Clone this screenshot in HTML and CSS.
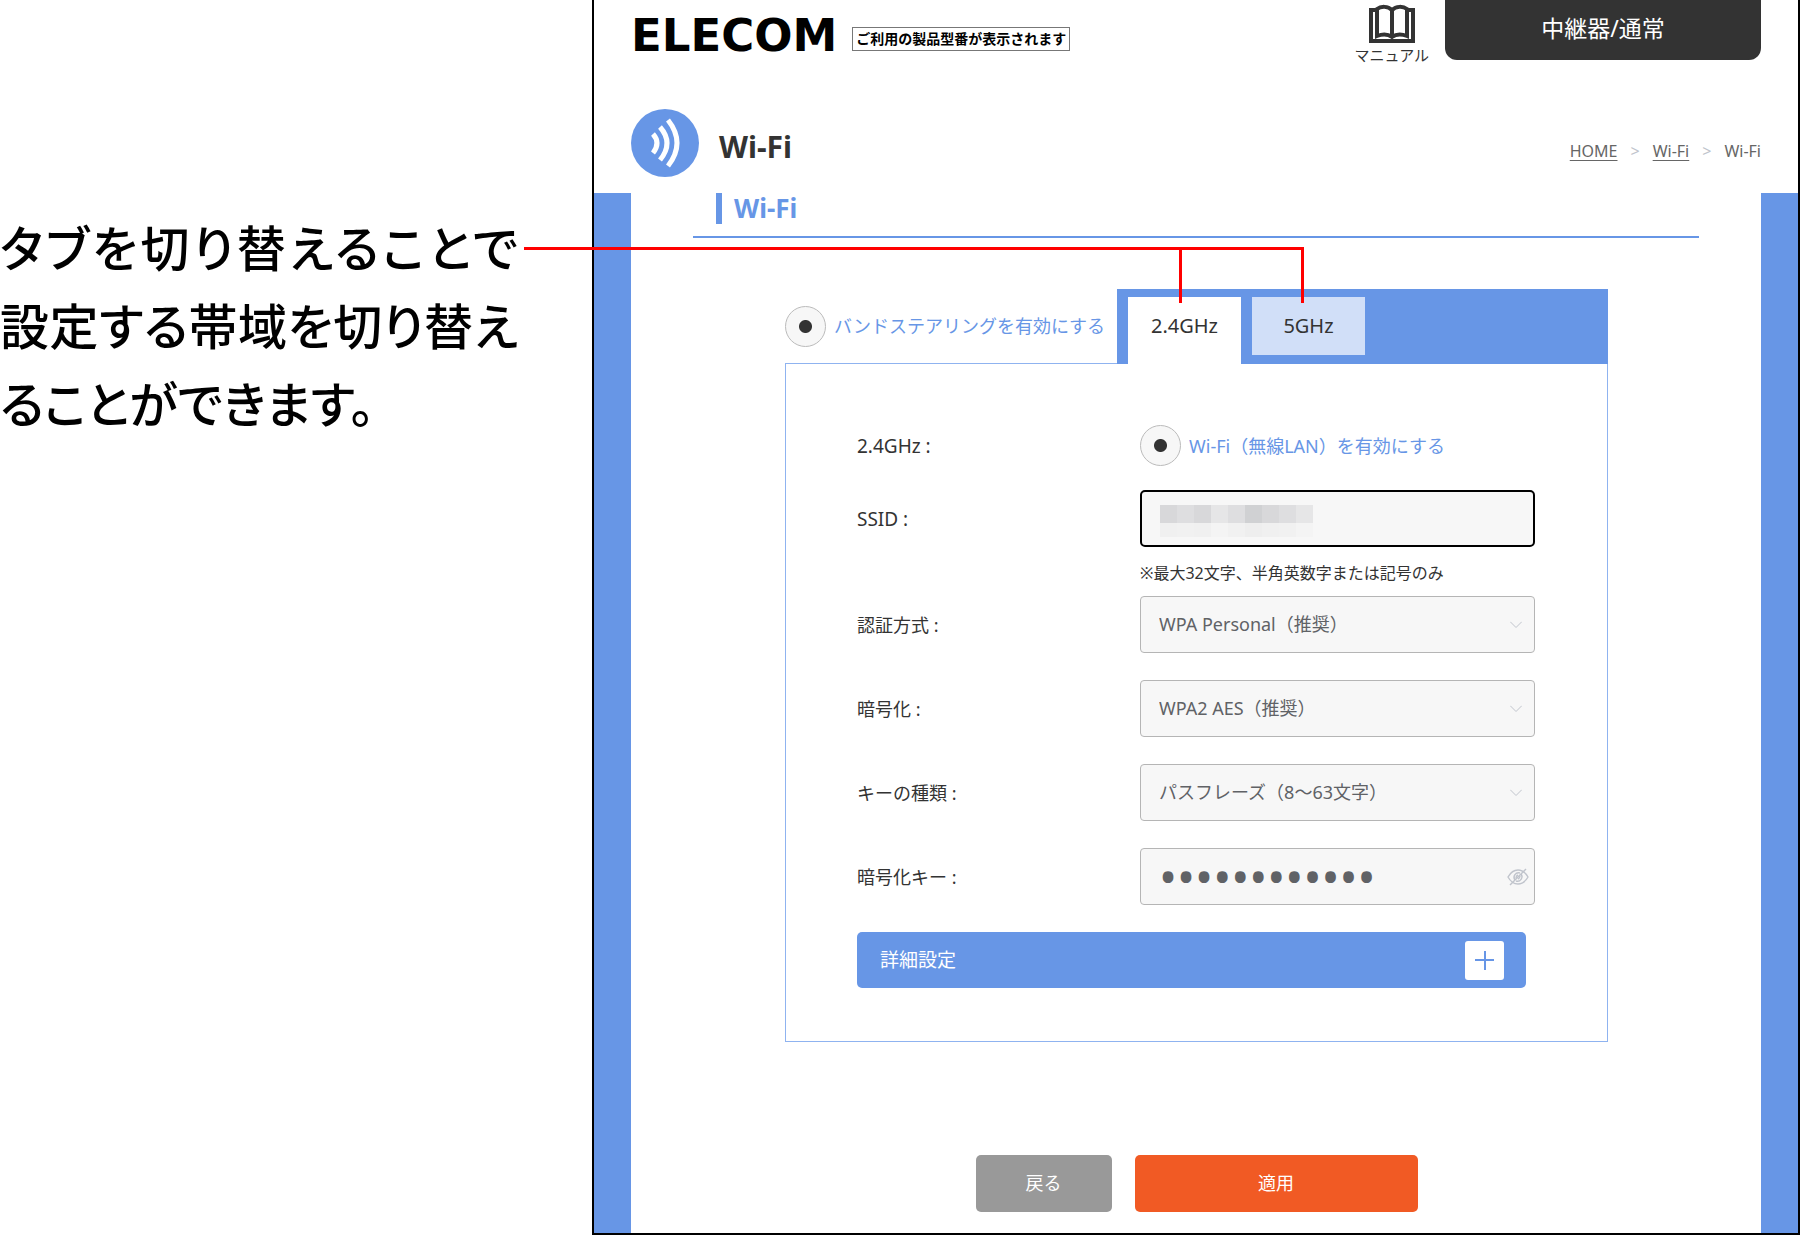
FILE: index.html
```html
<!DOCTYPE html>
<html lang="ja">
<head>
    <meta charset="UTF-8">
    <meta name="viewport" content="width=device-width, initial-scale=1.0">
    <title>Wi-Fi</title>
    <link rel="stylesheet" href="styles.css">
</head>
<body>

    <div class="page">
        <aside class="note">
            <p>タブを切り替えることで設定する帯域を切り替えることができます。</p>
        </aside>

        <div class="screen">
            <header class="header">
                <div class="logo">ELECOM</div>
                <div class="model">ご利用の製品型番が表示されます</div>
                <a href="#" class="manual">
                    <svg width="46" height="40" viewBox="0 0 46 40" fill="none" stroke="#333" stroke-width="4">
                        <path d="M7 6H2v31h42V6h-5"/>
                        <path d="M23 6C19 2 12 2 8 5v27c5-2 11-2 15 1 4-3 10-3 15-1V5C34 2 27 2 23 6z"/>
                        <path d="M23 6v27"/>
                    </svg>
                    <span>マニュアル</span>
                </a>
                <div class="mode">中継器/通常</div>
            </header>

            <div class="title-bar">
                <svg class="title-icon" width="68" height="68" viewBox="0 0 68 68">
                    <circle cx="34" cy="34" r="34" fill="#6796e6"/>
                    <g fill="none" stroke="#fff" stroke-width="5">
                        <path d="M22 25Q30 34 22 44"/>
                        <path d="M29 18Q43 34 29 51"/>
                        <path d="M37 11Q55 34 37 57"/>
                    </g>
                </svg>
                <h1>Wi-Fi</h1>
                <nav class="breadcrumb">
                    <a href="#">HOME</a>
                    <span class="sep">&gt;</span>
                    <a href="#">Wi-Fi</a>
                    <span class="sep">&gt;</span>
                    <span>Wi-Fi</span>
                </nav>
            </div>

            <main class="main">
                <div class="section-title">
                    <h2>Wi-Fi</h2>
                </div>

                <form class="settings">
                    <div class="tab-row">
                        <div class="check">
                            <input type="checkbox" id="steering" checked>
                            <label for="steering">バンドステアリングを有効にする</label>
                        </div>
                        <div class="tabs">
                            <button type="button" class="tab active">2.4GHz</button>
                            <button type="button" class="tab">5GHz</button>
                        </div>
                    </div>

                    <div class="panel">
                        <div class="row row-check">
                            <span class="name name-en">2.4GHz :</span>
                            <div class="check">
                                <input type="checkbox" id="wifi" checked>
                                <label for="wifi">Wi-Fi（無線LAN）を有効にする</label>
                            </div>
                        </div>

                        <div class="row row-ssid">
                            <label class="name name-en" for="ssid">SSID :</label>
                            <div class="field">
                                <input type="text" id="ssid" class="input ssid">
                                <!-- SSIDのモザイク -->
                                <div class="mosaic">
                                    <i class="m3"></i><i class="m2"></i><i class="m3"></i><i class="m1"></i><i class="m2"></i><i class="m4"></i><i class="m3"></i><i class="m2"></i><i class="m1"></i>
                                </div>
                            </div>
                            <p class="hint">※最大32文字、半角英数字または記号のみ</p>
                        </div>

                        <div class="row">
                            <label class="name" for="auth">認証方式 :</label>
                            <div class="field">
                                <select id="auth" class="input"><option>WPA Personal（推奨）</option></select>
                                <svg class="chevron" width="12" height="7" viewBox="0 0 12 7"><path d="M0 0l6 6 6-6"/></svg>
                            </div>
                        </div>

                        <div class="row">
                            <label class="name" for="cipher">暗号化 :</label>
                            <div class="field">
                                <select id="cipher" class="input"><option>WPA2 AES（推奨）</option></select>
                                <svg class="chevron" width="12" height="7" viewBox="0 0 12 7"><path d="M0 0l6 6 6-6"/></svg>
                            </div>
                        </div>

                        <div class="row">
                            <label class="name" for="keytype">キーの種類 :</label>
                            <div class="field">
                                <select id="keytype" class="input"><option>パスフレーズ（8～63文字）</option></select>
                                <svg class="chevron" width="12" height="7" viewBox="0 0 12 7"><path d="M0 0l6 6 6-6"/></svg>
                            </div>
                        </div>

                        <div class="row">
                            <label class="name" for="key">暗号化キー :</label>
                            <div class="field">
                                <input type="password" id="key" class="input key" value="passphrase12">
                                <svg class="eye" width="22" height="18" viewBox="0 0 22 18" fill="none" stroke="#c0c4cc" stroke-width="1.4">
                                    <path d="M1 9Q5 2 11 2t10 7q-4 7-10 7T1 9z"/>
                                    <path d="M8 12a4.500 4.500 0 0 1 5-7M14 6a4.500 4.500 0 0 1-5 7"/>
                                    <path d="M9 10q0-2 2-3M13 8q0 2-2 3"/>
                                    <path d="M3 17L19 1"/>
                                </svg>
                            </div>
                        </div>

                        <div class="detail">
                            <span>詳細設定</span>
                            <button type="button" class="plus" aria-label="詳細設定を開く"></button>
                        </div>
                    </div>

                    <div class="actions">
                        <button type="button" class="btn btn-back">戻る</button>
                        <button type="button" class="btn btn-apply">適用</button>
                    </div>
                </form>
            </main>
        </div>

        <!-- 説明文からタブへの引き出し線 -->
        <div class="leader"><div class="leader-drop"></div></div>
    </div>

</body>
</html>
```

FILE: styles.css
```css
* {
    box-sizing: border-box;
}

body {
    margin: 0;
    background: #fff;
    color: #333;
    font-family: "Noto Sans", "Noto Sans CJK JP", sans-serif;
    font-size: 18px;
    line-height: 24px;
}

h1, h2, p {
    margin: 0;
}

button, input, select {
    font-family: inherit;
    font-size: inherit;
    color: inherit;
}

button {
    border: none;
    padding: 0;
    cursor: pointer;
}

.page {
    position: relative;
    display: flex;
}

/* 説明文 */
.note {
    flex: 0 0 592px;
    padding: 207px 74px 0 0;
    color: #000;
    font-family: "Noto Sans CJK JP", sans-serif;
    font-size: 49px;
    font-weight: 500;
    line-height: 78px;
    font-feature-settings: "palt";
    text-align: justify;
}

.leader {
    position: absolute;
    top: 247px;
    left: 524px;
    right: 496px;
    height: 56px;
    border-top: 3px solid #f00;
    border-right: 3px solid #f00;
    pointer-events: none;
}

.leader-drop {
    width: 3px;
    height: 100%;
    margin-left: auto;
    margin-right: 119px;
    background: #f00;
}

/* 設定画面 */
.screen {
    flex: 1;
    border: 2px solid #000;
    border-top: none;
}

.header {
    display: flex;
    align-items: flex-start;
    height: 109px;
    padding: 0 37px;
}

.logo {
    padding-top: 14px;
    color: #000;
    font-family: "DejaVu Sans", sans-serif;
    font-size: 45px;
    font-weight: bold;
    line-height: 44px;
}

.model {
    margin: 27px auto 0 15px;
    padding: 0 3px;
    border: 1px solid #777;
    color: #000;
    font-size: 14px;
    font-weight: bold;
    line-height: 22px;
}

.manual {
    display: flex;
    flex-direction: column;
    align-items: center;
    margin-right: 16px;
    padding-top: 4px;
    color: #333;
    font-size: 15px;
    line-height: 22px;
    text-decoration: none;
}

.mode {
    width: 316px;
    height: 60px;
    border-radius: 0 0 12px 12px;
    background: #333;
    color: #fff;
    font-size: 23px;
    line-height: 56px;
    text-align: center;
}

.title-bar {
    display: flex;
    align-items: center;
    height: 84px;
    padding: 0 37px 16px;
}

.title-bar h1 {
    margin: 8px auto 0 20px;
    font-size: 30px;
    line-height: 36px;
}

.breadcrumb {
    display: flex;
    gap: 13px;
    padding-top: 16px;
    color: #666;
    font-size: 16px;
}

.breadcrumb a {
    color: #666;
    text-underline-offset: 3px;
}

.breadcrumb .sep {
    color: #c0c4cc;
}

.main {
    border: solid #6796e6;
    border-width: 0 37px;
    padding-bottom: 21px;
}

.section-title {
    margin: 0 62px;
    padding: 0 23px 12px;
    border-bottom: 2px solid #6796e6;
}

.section-title h2 {
    padding-left: 12px;
    border-left: 6px solid #6796e6;
    color: #6796e6;
    font-size: 26px;
    line-height: 31px;
}

.settings {
    margin: 51px 153px 0 154px;
}

.tab-row {
    display: flex;
    height: 75px;
}

.check {
    display: flex;
    align-items: center;
    gap: 8px;
    color: #6796e6;
    white-space: nowrap;
}

/* タブの左側だけ上辺の線を引く */
.tab-row .check {
    width: 332px;
    border-bottom: 1px solid #8fb3f0;
}

.check input {
    appearance: none;
    flex: none;
    width: 41px;
    height: 41px;
    margin: 0;
    border: 1px solid #bbb;
    border-radius: 50%;
    background: #f7f7f7;
}

.check input:checked {
    background: radial-gradient(circle, #333 6px, #f7f7f7 7px);
}

.tabs {
    flex: 1;
    display: flex;
    align-items: flex-start;
    gap: 11px;
    padding: 8px 11px 0;
    background: #6796e6;
}

.tab {
    width: 113px;
    height: 58px;
    padding-bottom: 2px;
    background: #d1dff8;
    color: #333;
    font-size: 20px;
}

.tab.active {
    height: 68px;
    padding-bottom: 12px;
    background: #fff;
}

.panel {
    padding: 61px 72px 53px 71px;
    border: 1px solid #8fb3f0;
    border-top: none;
    background: #fff;
}

.row {
    display: grid;
    grid-template-columns: 283px 1fr;
    align-items: center;
    margin-bottom: 27px;
}

.row-check {
    margin-bottom: 24px;
}

.row-ssid {
    margin-bottom: 11px;
}

.name-en {
    font-size: 19px;
}

.field {
    position: relative;
}

.input {
    appearance: none;
    display: block;
    width: 100%;
    height: 57px;
    padding: 0 18px 2px;
    border: 1px solid #b5b5b5;
    border-radius: 4px;
    background: #f7f7f7;
    color: #606266;
}

.ssid {
    border: 2px solid #000;
    border-radius: 5px;
}

/* 伏せ字の丸を大きく見せる */
.key {
    font-size: 48px;
}

.mosaic {
    position: absolute;
    top: 15px;
    left: 20px;
    display: flex;
}

.mosaic i {
    width: 17px;
    height: 32px;
    background: linear-gradient(#e6e6e7 18px, #f4f4f4 18px);
}

.mosaic .m2 {
    background: linear-gradient(#dedee0 18px, #f1f1f1 18px);
}

.mosaic .m3 {
    background: linear-gradient(#d8d8da 18px, #f0f0f0 18px);
}

.mosaic .m4 {
    background: linear-gradient(#d0d1d3 18px, #eee 18px);
}

.hint {
    grid-column: 2;
    padding-top: 14px;
    font-size: 16px;
}

.chevron,
.eye {
    position: absolute;
    top: 50%;
    transform: translateY(-50%);
}

.chevron {
    right: 13px;
    fill: none;
    stroke: #c0c4cc;
    pointer-events: none;
}

.eye {
    right: 6px;
}

.detail {
    display: flex;
    align-items: center;
    justify-content: space-between;
    height: 56px;
    margin-right: 9px;
    padding: 0 22px 0 23px;
    border-radius: 5px;
    background: #6796e6;
    color: #fff;
    font-size: 19px;
}

.plus {
    width: 39px;
    height: 39px;
    border-radius: 3px;
    background:
        linear-gradient(#6796e6, #6796e6) center / 19px 2px no-repeat,
        linear-gradient(#6796e6, #6796e6) center / 2px 19px no-repeat,
        #fff;
}

.actions {
    display: flex;
    justify-content: center;
    gap: 23px;
    padding-top: 113px;
}

.btn {
    height: 57px;
    padding-bottom: 4px;
    border-radius: 5px;
    color: #fff;
}

.btn-back {
    width: 136px;
    background: #999;
}

.btn-apply {
    width: 283px;
    background: #f15a24;
}
```
